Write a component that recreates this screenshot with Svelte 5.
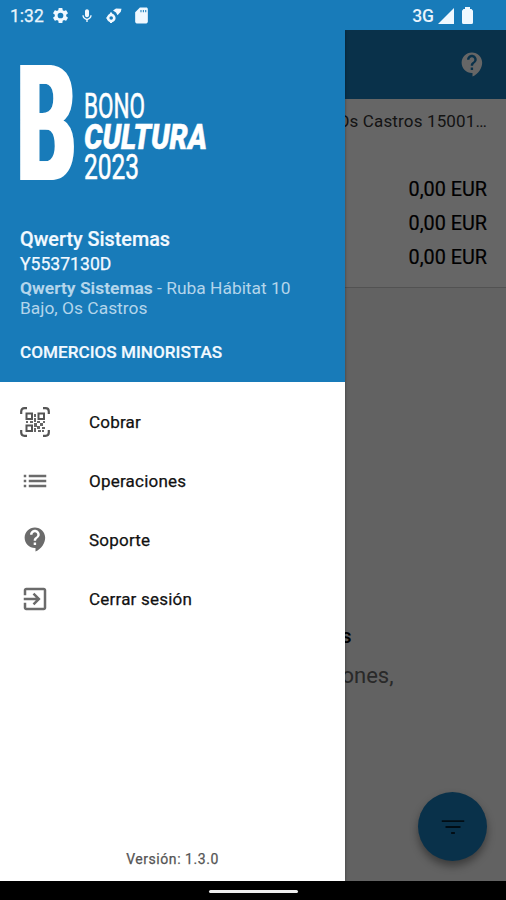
<script>
  const help = 'M11.5 2C6.81 2 3 5.81 3 10.5S6.81 19 11.5 19h.5v3c4.86-2.34 8-7 8-11.5C20 5.81 16.19 2 11.5 2zm1 14.5h-2v-2h2v2zm0-3.5h-2c0-3.25 3-3 3-5 0-1.1-.9-2-2-2s-2 .9-2 2h-2c0-2.21 1.79-4 4-4s4 1.79 4 4c0 2.5-3 2.75-3 5z';
  const gear = 'M19.14 12.94c.04-.3.06-.61.06-.94 0-.32-.02-.64-.07-.94l2.03-1.58a.49.49 0 0 0 .12-.61l-1.92-3.32a.488.488 0 0 0-.59-.22l-2.39.96c-.5-.38-1.03-.7-1.62-.94l-.36-2.54a.484.484 0 0 0-.48-.41h-3.84c-.24 0-.43.17-.47.41l-.36 2.54c-.59.24-1.13.57-1.62.94l-2.39-.96c-.22-.08-.47 0-.59.22L2.74 8.87c-.12.21-.08.47.12.61l2.03 1.58c-.05.3-.09.63-.09.94s.02.64.07.94l-2.03 1.58a.49.49 0 0 0-.12.61l1.92 3.32c.12.22.37.29.59.22l2.39-.96c.5.38 1.03.7 1.62.94l.36 2.54c.05.24.24.41.48.41h3.84c.24 0 .44-.17.47-.41l.36-2.54c.59-.24 1.13-.56 1.62-.94l2.39.96c.22.08.47 0 .59-.22l1.92-3.32c.12-.22.07-.47-.12-.61l-2.01-1.58zM12 15.6A3.6 3.6 0 1 1 12 8.4a3.6 3.6 0 0 1 0 7.2z';
  const items = [
    { id: 'qr', label: 'Cobrar' },
    { id: 'list', label: 'Operaciones' },
    { id: 'help', label: 'Soporte' },
    { id: 'exit', label: 'Cerrar sesión' }
  ];
  const amounts = ['0,00 EUR', '0,00 EUR', '0,00 EUR'];
</script>

<div class="phone">
  <header class="status">
    <span class="time">1:32</span>
    <svg class="s-gear" width="19" height="19" viewBox="0 0 24 24"><path d={gear} /></svg>
    <svg class="s-mic" width="16" height="16" viewBox="0 0 24 24"><path d="M12 14c1.66 0 3-1.34 3-3V5c0-1.66-1.34-3-3-3S9 3.34 9 5v6c0 1.66 1.34 3 3 3zm5-3c0 2.76-2.24 5-5 5s-5-2.24-5-5H5c0 3.53 2.61 6.43 6 6.92V21h2v-3.08c3.39-.49 6-3.39 6-6.92h-2z" /></svg>
    <svg class="s-key" width="18" height="18" viewBox="0 0 18 18"><circle cx="6.2" cy="11" r="3.1" fill="none" stroke="#f0f8ff" stroke-width="2.6" /><path d="M8 3.5l3-2 5.5.3-.7 3-3.3 3.4-1.5-2.7zM5 5.5h2v2H5zM1.5 10h2v2h-2zM5 14h2v2H5z" /></svg>
    <svg class="s-sd" width="19" height="19" viewBox="0 0 24 24"><path d="M18 2h-8L4 8v12c0 1.1.9 2 2 2h12c1.1 0 2-.9 2-2V4c0-1.1-.9-2-2-2zm-6 6h-1.300V5H12v3zm3 0h-1.300V5H15v3zm3 0h-1.300V5H18v3z" /></svg>
    <span class="net">3G</span>
    <svg class="s-signal" width="16" height="16" viewBox="0 0 16 16"><path d="M16 0v16H0z" /></svg>
    <svg class="s-batt" width="11" height="17" viewBox="0 0 11 17"><path d="M3 0h5v2h1.5L11 3.7V15.5Q11 17 9.5 17h-8Q0 17 0 15.500V3.700L1.500 2H3z" /></svg>
  </header>

  <div class="content">
    <main class="page">
      <div class="appbar"><svg width="29" height="29" viewBox="0 0 24 24"><path d={help} /></svg></div>
      <section class="summary">
        <p class="address">Ruba Hábitat 10 Bajo, Os Castros 15001…</p>
        {#each amounts as amount}<p class="amount">{amount}</p>{/each}
      </section>
      <section class="empty">
        <h2>Sin movimientos</h2>
        <p>No se han encontrado operaciones,</p>
      </section>
      <button class="fab" aria-label="Filtrar"><svg width="30" height="30" viewBox="0 0 24 24"><path d="M10.500 17.500h3v-1.500h-3zM3 6.500V8h18V6.500zm3 6.200h12v-1.500H6z" /></svg></button>
    </main>
    <div class="scrim"></div>

    <aside class="drawer">
      <div class="head">
        <svg class="logo" width="200" height="130" viewBox="0 0 200 130">
          <g class="heavy"><text class="big" x="0" y="0" transform="translate(-2.400 121) scale(.56 1)">B</text></g>
          <text class="thin" x="64" y="58.500" textLength="61" lengthAdjust="spacingAndGlyphs">BONO</text>
          <text class="mid" x="64" y="89.500" textLength="123" lengthAdjust="spacingAndGlyphs">CULTURA</text>
          <text class="thin" x="64" y="120" textLength="55" lengthAdjust="spacingAndGlyphs">2023</text>
        </svg>
        <div class="name">Qwerty Sistemas</div>
        <div class="nif">Y5537130D</div>
        <div class="place"><b>Qwerty Sistemas</b> - Ruba Hábitat 10<br />Bajo, Os Castros</div>
        <div class="type">COMERCIOS MINORISTAS</div>
      </div>
      <nav>
        {#each items as item}
          <a href="#{item.id}">
            <span class="icon">
              {#if item.id === 'qr'}
                <svg width="30" height="30" viewBox="0 0 30 30">
                  <path fill="none" stroke="#555" stroke-width="2.200" d="M1.200 7V4.500q0-3.300 3.300-3.300H7M23 1.200h2.500q3.300 0 3.300 3.300V7M28.800 23v2.500q0 3.300-3.300 3.300H23M7 28.800H4.500q-3.300 0-3.300-3.300V23" />
                  <path fill="none" stroke="#555" stroke-width="2" d="M6.500 6.500H12V12H6.500zM18.500 6.500H24V12h-5.500zM6.500 18.500H12V24H6.500z" />
                  <path fill="#666" d="M14 7h2v3h-2zM14 11h2v4h-2zM6 14h2v2H6zM10 14h3v2h-3zM17 14h3v2h-3zM23 14h2v2h-2zM14 16h3v4h-3zM20 16h3v3h-3zM14 21h2v4h-2zM17 19h3v3h-3zM22 20h3v2h-3zM18 23h3v2h-3zM22 23h2v2h-2z" />
                </svg>
              {:else if item.id === 'list'}
                <svg width="30" height="30" viewBox="0 0 24 24"><path d="M3 13h2v-2H3v2zm0 4h2v-2H3v2zm0-8h2V7H3v2zm4 4h14v-2H7v2zm0 4h14v-2H7v2zM7 7v2h14V7H7z" /></svg>
              {:else if item.id === 'help'}
                <svg width="29" height="29" viewBox="0 0 24 24"><path d={help} /></svg>
              {:else}
                <svg width="30" height="30" viewBox="0 0 24 24"><path d="M10.090 15.590L11.500 17l5-5-5-5-1.410 1.410L12.670 11H3v2h9.670l-2.580 2.590zM19 3H5c-1.110 0-2 .9-2 2v4h2V5h14v14H5v-4H3v4c0 1.100.89 2 2 2h14c1.100 0 2-.9 2-2V5c0-1.100-.9-2-2-2z" /></svg>
              {/if}
            </span>
            <span>{item.label}</span>
          </a>
        {/each}
      </nav>
      <div class="version">Versión: 1.3.0</div>
    </aside>
  </div>

  <footer><span></span></footer>
</div>

<style>
  :global(body) { margin: 0; }
  .phone { width: 506px; height: 900px; display: flex; flex-direction: column; font-family: Roboto, sans-serif; overflow: hidden; background: #000; }
  .status { height: 30px; flex: none; display: flex; align-items: center; background: #187bb9; color: #e9f4fc; box-sizing: border-box; padding: 1px 33px 0 10px; }
  .status svg { fill: #f0f8ff; flex: none; }
  .time { font-size: 17.500px; width: 41px; -webkit-text-stroke: .25px; }
  .s-mic { margin-left: 9px; }
  .s-key { margin-left: 10px; }
  .s-sd { margin-left: 9px; }
  .net { margin-left: auto; font-size: 17.500px; font-weight: 500; }
  .s-signal { margin-left: 4px; }
  .s-batt { margin-left: 8px; }
  .content { position: relative; height: 851px; flex: none; overflow: hidden; }
  .page { position: relative; height: 100%; background: #f4f4f4; text-align: right; }
  p, h2 { margin: 0; white-space: nowrap; }
  .appbar { height: 69px; background: #187bb9; display: flex; justify-content: flex-end; align-items: center; padding-right: 19px; }
  .appbar svg { fill: #fff; }
  .summary { height: 189px; background: #fff; border-bottom: 1px solid #ccc; padding: 10px 19px 0 0; box-sizing: border-box; }
  .address { font-size: 17px; line-height: 24px; height: 64px; color: #333; letter-spacing: .15px; }
  .amount { font-size: 19.800px; line-height: 34px; color: #000; -webkit-text-stroke: .2px; }
  .empty { margin-top: 333px; display: flex; flex-direction: column; align-items: center; }
  .empty h2 { width: 197px; font-size: 20px; font-weight: 500; line-height: 30px; }
  .empty p { width: 281px; font-size: 22px; line-height: 28px; margin-top: 11px; color: #666; display: flex; justify-content: flex-end; }
  .fab { position: absolute; right: 19px; top: 762px; width: 69px; height: 69px; border: 0; padding: 0; border-radius: 50%; background: #187bb9; display: flex; align-items: center; justify-content: center; box-shadow: 0 5px 9px #0006; }
  .fab svg { fill: #042235; }
  .scrim { position: absolute; inset: 0; background: rgba(0, 0, 0, .6); }
  .drawer { position: absolute; left: 0; top: 0; width: 345px; height: 100%; background: #fff; display: flex; flex-direction: column; box-shadow: 0 0 3px #0006; }
  .head { height: 352px; flex: none; box-sizing: border-box; background: #187bb9; padding: 29px 20px 0; color: #f2f9ff; }
  .logo { display: block; fill: #fff; overflow: visible; }
  .big { font-size: 161px; font-weight: 700; }
  .heavy { filter: drop-shadow(3px 0 0 #fff) drop-shadow(-3px 0 0 #fff); }
  .thin { font-size: 35.500px; font-weight: 400; stroke: #fff; stroke-width: .6px; }
  .mid { font-size: 35px; font-weight: 900; font-style: italic; stroke: #fff; stroke-width: .5px; }
  .name { margin-top: 38px; font-size: 19.800px; line-height: 25px; font-weight: 500; -webkit-text-stroke: .2px; }
  .nif { font-size: 17.600px; line-height: 24px; -webkit-text-stroke: .25px; }
  .place { margin-top: 2px; font-size: 17.400px; line-height: 20px; color: #b3d5eb; white-space: nowrap; }
  .place b { font-weight: 700; }
  .type { margin-top: 24px; font-size: 17.150px; line-height: 21px; font-weight: 500; -webkit-text-stroke: .2px; }
  nav { padding-top: 10px; }
  nav a { height: 59px; display: flex; align-items: center; padding-left: 20px; color: #111; text-decoration: none; font-size: 17px; letter-spacing: .22px; -webkit-text-stroke: .25px; }
  .icon { width: 30px; margin-right: 39px; display: flex; justify-content: center; -webkit-text-stroke: 0; }
  .icon svg { fill: #6b6b6b; }
  .version { margin-top: auto; padding-bottom: 12px; line-height: 20px; text-align: center; font-size: 14px; letter-spacing: .55px; color: #555; -webkit-text-stroke: .25px; }
  footer { flex: 1; display: flex; justify-content: center; background: #000; }
  footer span { width: 89px; height: 3px; margin-top: 9px; background: #eee; border-radius: 2px; }
</style>
